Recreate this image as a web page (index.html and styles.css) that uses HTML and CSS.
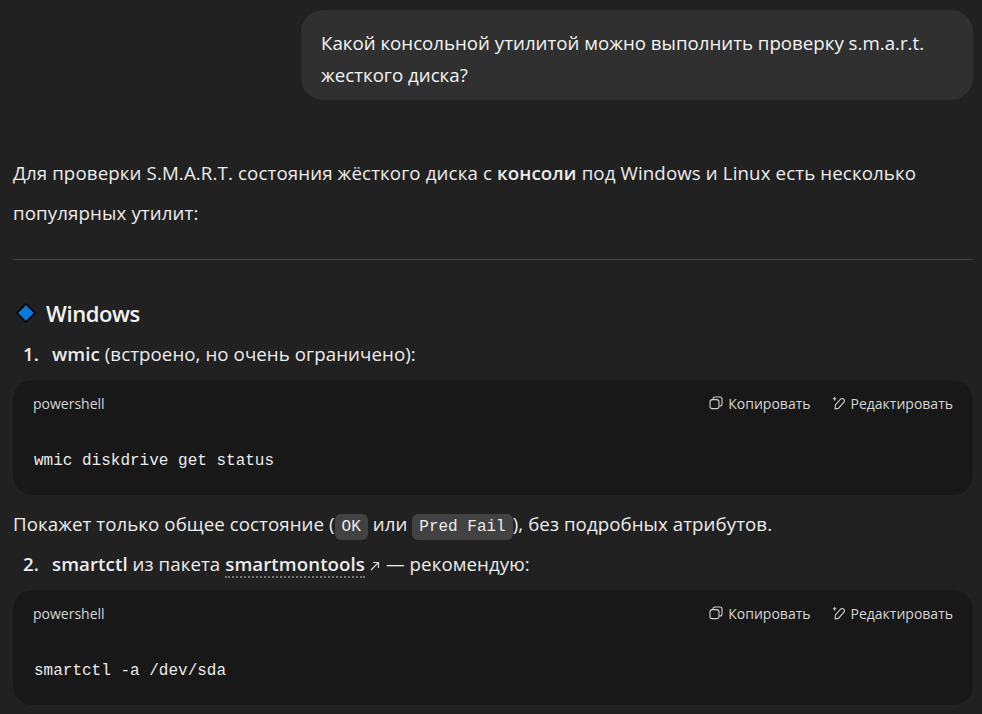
FILE: index.html
```html
<!DOCTYPE html>
<html lang="ru">

<head>
    <meta charset="UTF-8">
    <title>S.M.A.R.T.</title>
    <link rel="stylesheet" href="styles.css">
</head>

<body>
    <div class="chat">
        <div class="bubble">Какой консольной утилитой можно выполнить проверку s.m.a.r.t. жесткого диска?</div>

        <p class="intro">Для проверки S.M.A.R.T. состояния жёсткого диска с <b>консоли</b> под Windows и Linux есть несколько популярных утилит:</p>
        <hr class="sep">

        <h3 class="heading">
            <svg class="diamond" width="20" height="20" viewBox="0 0 20 20">
                <path d="M10 1 19 10 10 19 1 10Z" fill="#0b78dc" stroke="#000" stroke-width="1.6" stroke-linejoin="round" />
            </svg>
            Windows
        </h3>

        <div class="item"><span class="num">1.</span><span><b>wmic</b> (встроено, но очень ограничено):</span></div>
        <div class="code">
            <div class="code-head">
                <span>powershell</span>
                <div class="actions">
                    <span class="action">
                        <svg width="14" height="14" viewBox="0 0 14 14" fill="none" stroke="#d0d0d0" stroke-width="1.1">
                            <rect x="1" y="3.600" width="9" height="9" rx="2.400" />
                            <path d="M4 3.400V3a2 2 0 0 1 2-2h5a2 2 0 0 1 2 2v5a2 2 0 0 1-2 2h-.8" />
                        </svg>
                        Копировать
                    </span>
                    <span class="action">
                        <svg width="14" height="14" viewBox="0 0 14 14" fill="none" stroke="#d0d0d0" stroke-width="1.1">
                            <path d="M3.200 12.800 3.400 9 8.800 3a1.900 1.900 0 0 1 2.700 0l.4.4a1.900 1.900 0 0 1 0 2.700L6.400 12.400Z" />
                            <path d="M2.600 1v3.400M.9 2.700h3.400" />
                        </svg>
                        Редактировать
                    </span>
                </div>
            </div>
            <pre class="code-body">wmic diskdrive get status</pre>
        </div>

        <p class="note">Покажет только общее состояние (<code>OK</code> или <code>Pred Fail</code>), без подробных атрибутов.</p>

        <div class="item item-next"><span class="num">2.</span><span><b>smartctl</b> из пакета <a class="link" href="#">smartmontools</a><svg class="arrow" width="12" height="12" viewBox="0 0 12 12" fill="none" stroke="#d8d8d8" stroke-width="1.2"><path d="M2 10 9.500 2.500M4 2.500h5.500V8" /></svg> — рекомендую:</span></div>
        <div class="code">
            <div class="code-head">
                <span>powershell</span>
                <div class="actions">
                    <span class="action">
                        <svg width="14" height="14" viewBox="0 0 14 14" fill="none" stroke="#d0d0d0" stroke-width="1.1">
                            <rect x="1" y="3.600" width="9" height="9" rx="2.400" />
                            <path d="M4 3.400V3a2 2 0 0 1 2-2h5a2 2 0 0 1 2 2v5a2 2 0 0 1-2 2h-.8" />
                        </svg>
                        Копировать
                    </span>
                    <span class="action">
                        <svg width="14" height="14" viewBox="0 0 14 14" fill="none" stroke="#d0d0d0" stroke-width="1.1">
                            <path d="M3.200 12.800 3.400 9 8.800 3a1.900 1.900 0 0 1 2.700 0l.4.4a1.900 1.900 0 0 1 0 2.700L6.400 12.400Z" />
                            <path d="M2.600 1v3.400M.9 2.700h3.400" />
                        </svg>
                        Редактировать
                    </span>
                </div>
            </div>
            <pre class="code-body">smartctl -a /dev/sda</pre>
        </div>
    </div>
</body>

</html>
```
FILE: styles.css
```css
* {
    box-sizing: border-box;
    margin: 0;
    padding: 0;
}

html,
body {
    height: 714px;
    overflow: hidden;
}

body {
    background-color: #212121;
    color: #ececec;
    font-family: "Open Sans", "Noto Sans", sans-serif;
    font-size: 18.7px;
}

.chat {
    padding: 10px 9px 0 13px;
}

.bubble {
    width: 672px;
    height: 90px;
    margin-left: auto;
    padding: 17px 20px;
    border-radius: 22px;
    background-color: #303030;
    line-height: 32px;
    color: #f4f4f4;
}

.intro {
    margin-top: 53px;
    line-height: 40px;
    letter-spacing: 0.12px;
}

.sep {
    margin-top: 26px;
    border: none;
    border-top: 1px solid #444;
}

.heading {
    display: flex;
    align-items: center;
    gap: 10px;
    margin-top: 38px;
    padding-left: 3px;
    height: 30px;
    font-size: 22px;
    font-weight: 600;
    letter-spacing: -0.4px;
    color: #f4f4f4;
}

.item {
    display: flex;
    height: 32px;
    line-height: 32px;
    letter-spacing: 0.07px;
}

.heading + .item {
    margin-top: 10px;
}

.item-next {
    margin-top: 2px;
}

.num {
    width: 39px;
    padding-right: 13px;
    text-align: right;
    font-weight: 600;
}

b {
    font-weight: 600;
}

.code {
    height: 115px;
    margin-top: 10px;
    border-radius: 20px;
    background-color: #181818;
}

.code-head {
    display: flex;
    justify-content: space-between;
    align-items: center;
    height: 46px;
    padding: 0 20px;
    font-size: 14px;
    color: #d6d6d6;
}

.actions {
    display: flex;
    gap: 21px;
}

.action {
    display: flex;
    align-items: center;
    gap: 5px;
}

.code-body {
    padding: 25px 21px 0;
    font-family: "Liberation Mono", monospace;
    font-size: 16px;
    line-height: 20px;
    color: #ececec;
}

.note {
    margin-top: 10px;
    line-height: 38px;
    letter-spacing: 0.07px;
}

code {
    padding: 4px 7px;
    border-radius: 6px;
    background-color: #424242;
    font-family: "Liberation Mono", monospace;
    font-size: 16px;
    letter-spacing: 0;
}

.link {
    color: #ececec;
    font-weight: 600;
    text-decoration: none;
    border-bottom: 2px dotted #777;
}

.arrow {
    margin: 0 0 -1px 4px;
}
```
